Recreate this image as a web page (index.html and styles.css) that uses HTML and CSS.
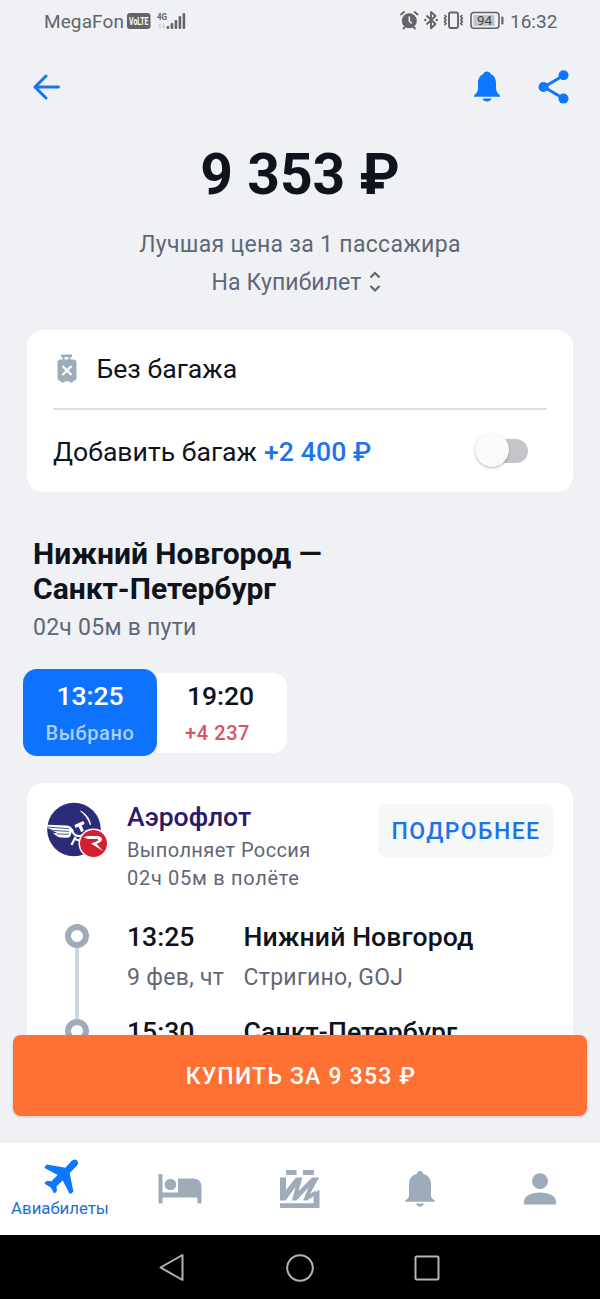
FILE: index.html
```html
<!DOCTYPE html>
<html lang="ru">
<head>
<meta charset="utf-8">
<title>Авиабилеты</title>
<link rel="stylesheet" href="styles.css">
</head>
<body>
<div class="status">
  <span class="carrier">MegaFon</span>
  <svg width="24" height="16" viewBox="0 0 24 16"><rect x="0" y="0" width="23.500" height="16" rx="3" fill="#626467"/><text class="volte" x="2" y="11.700" textLength="19.500" lengthAdjust="spacingAndGlyphs">VoLTE</text></svg>
  <svg class="signal" width="30" height="20" viewBox="0 0 30 20"><text class="net" x="0" y="8.500" textLength="10" lengthAdjust="spacingAndGlyphs">4G</text><path d="M3 18v-5l-1.500 1.500M6.500 12v5l1.500-1.500" fill="none" stroke="#c4c6ca" stroke-width="1"/><g fill="#626467"><rect x="9.600" y="15" width="2.600" height="3" rx="1"/><rect x="13.600" y="12" width="2.600" height="6" rx="1"/><rect x="17.600" y="9" width="2.600" height="9" rx="1"/><rect x="21.600" y="5" width="2.600" height="13" rx="1"/><rect x="25.600" y="2" width="2.600" height="16" rx="1"/></g></svg>
  <svg class="sys" width="106" height="22" viewBox="399 10 106 22"><circle cx="409.300" cy="20.800" r="7.500" fill="#626467"/><path d="M401 14.500l3-2.500M417.600 14.500l-3-2.500M405 27l-1.500 1.500M413.500 27l1.500 1.500" stroke="#626467" stroke-width="1.800" stroke-linecap="round"/><path d="M409.300 16.500v4.500l2.500 2.500" fill="none" stroke="#eff1f5" stroke-width="1.600"/><path d="M426.500 15.500l9 8.500-4.500 4.300V12l4.500 4-9 8.500" fill="none" stroke="#626467" stroke-width="1.900" stroke-linejoin="round"/><circle cx="425.300" cy="20" r="1.200" fill="#626467"/><circle cx="436.800" cy="20" r="1.200" fill="#626467"/><rect x="449" y="12.500" width="9" height="15.500" rx="1.500" fill="none" stroke="#626467" stroke-width="1.900"/><path d="M444.500 15l1.500 1.500-1.500 1.800 1.500 1.700-1.500 1.800 1.500 1.700-1.500 1.800M462.300 15l-1.500 1.500 1.500 1.800-1.500 1.700 1.500 1.800-1.500 1.700 1.500 1.800" fill="none" stroke="#626467" stroke-width="1.700"/><rect x="471" y="12.500" width="28" height="15.800" rx="3" fill="none" stroke="#626467" stroke-width="1.600"/><rect x="473.500" y="15" width="21" height="11" fill="#c2c3c6"/><rect x="501.300" y="16.500" width="2.200" height="8" rx="1" fill="#626467"/><text class="batt" x="484.500" y="25.200" text-anchor="middle">94</text></svg>
  <span class="clock">16:32</span>
</div>

<div class="toolbar">
  <svg width="28" height="28" viewBox="0 0 28 28"><path d="M25.500 14H2M13 3L2 14l11 11" fill="none" stroke="#1a74f0" stroke-width="3" stroke-linecap="round" stroke-linejoin="round"/></svg>
  <span class="actions">
    <svg width="28" height="32" viewBox="0 0 28 32"><path d="M14 .5c-2 0-3.200 1-3.700 2.400C6.500 4.500 5 8 5 12v5c0 3.500-1.500 5-3.500 7-1 1-.8 1.800.2 1.800h24.600c1 0 1.200-.8.2-1.800-2-2-3.500-3.500-3.500-7v-5c0-4-1.500-7.500-5.300-9.100C17.200 1.500 16 .5 14 .5zM9.500 27.500h9c-.6 1.900-2.200 3-4.500 3s-3.900-1.100-4.500-3z" fill="#0d77ff"/></svg>
    <svg width="32" height="34" viewBox="0 0 32 34"><path d="M25.500 5.500L6 17l19.500 11.500" fill="none" stroke="#0d77ff" stroke-width="3"/><g fill="#0d77ff"><circle cx="25.500" cy="5.300" r="5"/><circle cx="5.500" cy="17" r="5"/><circle cx="25.500" cy="28.600" r="5"/></g></svg>
  </span>
</div>

<main class="content">
  <div class="price">9 353 ₽</div>
  <div class="sub">
    <div class="sub-price">Лучшая цена за 1 пассажира</div>
    <div class="sub-agent"><span>На Купибилет</span><svg width="12" height="22" viewBox="0 0 12 22"><path d="M1.500 6.500L6 2l4.500 4.500M1.500 15L6 19.500l4.500-4.500" fill="none" stroke="#5f6777" stroke-width="2.200"/></svg></div>
  </div>

  <section class="card baggage">
    <div class="bag-row">
      <svg width="20" height="30" viewBox="0 0 20 30"><path d="M4 .5h11v2.500h-1.500v3h-2v-3h-4v3h-2v-3H4z" fill="#9dabba"/><path d="M3.500 5.500h13a3 3 0 0 1 3 3v14.900a3.500 3.500 0 0 1-3 3.500l-1 1.600h-2.500l-1-1.300h-4l-1 1.300H4.500l-1-1.600a3.500 3.500 0 0 1-3-3.500V8.500a3 3 0 0 1 3-3z" fill="#9dabba"/><path d="M5.500 12l9 9M14.500 12l-9 9" stroke="#fff" stroke-width="2.300"/></svg>
      <span class="bag-none">Без багажа</span>
    </div>
    <div class="bag-row add">
      <span class="bag-add">Добавить багаж</span><span class="bag-cost">+2 400 ₽</span>
      <span class="switch"><span class="knob"></span></span>
    </div>
  </section>

  <h1 class="route"><span class="from">Нижний Новгород —</span><br><span class="to">Санкт-Петербург</span></h1>
  <div class="travel">02ч 05м в пути</div>

  <div class="times">
    <div class="time on"><b>13:25</b><span class="picked">Выбрано</span></div>
    <div class="time off"><b>19:20</b><span class="extra">+4 237</span></div>
  </div>

  <section class="card flight">
    <div class="airline">
      <svg class="logo" width="62" height="58" viewBox="0 0 62 58"><circle cx="27" cy="27.500" r="26.800" fill="#2c2b78"/><path d="M0 22.800l20 .8c3 .2 5 1.700 5.500 4.400L23 35c-7 2-13 .5-17-4l5 .3-8-3.600h3L0 26z" fill="#fff"/><path d="M0 25l22 1.700M5 28.400l17 1M10 32l12 .2" stroke="#2c2b78" stroke-width=".8"/><path d="M33.500 9c6 3 9.500 8 10 14-2.500-6-5.500-10.500-10-14z" fill="#fff" stroke="#fff" stroke-width=".8"/><path d="M25 27c.5 5 4 7.500 8 7 4-.5 6.500-3 7-6" fill="none" stroke="#fff" stroke-width="2.200"/><path d="M28 24.500l9-4M32.500 22.500l3 7" fill="none" stroke="#fff" stroke-width="3.200"/><path d="M28.500 35l-4 8M28 37l4 1.500" stroke="#fff" stroke-width="2.200"/><circle cx="46.500" cy="41.500" r="15" fill="#fff"/><circle cx="46.500" cy="41.500" r="13.500" fill="#d3202f"/><path d="M36.500 35.500l3-1.500H50c5.500 0 6.500 4.500 2.500 6.500l-3 1.200 6.500 7.300-12-7.500 5.500-2c2.500-1 2-2.500 0-2.500H41z" fill="#fff"/></svg>
      <div class="names">
        <div class="name">Аэрофлот</div>
        <div class="operator">Выполняет Россия</div>
        <div class="inair">02ч 05м в полёте</div>
      </div>
      <div class="more"><span>ПОДРОБНЕЕ</span></div>
    </div>
    <div class="legs">
      <div class="track"><i class="dot"></i><i class="line"></i><i class="dot"></i></div>
      <div class="stops">
        <span class="t">13:25</span><span class="city">Нижний Новгород</span>
        <span class="date">9 фев, чт</span><span class="port">Стригино, GOJ</span>
        <span class="t arr">15:30</span><span class="city arr">Санкт-Петербург</span>
      </div>
    </div>
  </section>
</main>

<div class="buy"><span>КУПИТЬ ЗА 9 353 ₽</span></div>

<nav class="tabs">
  <div class="tab active">
    <svg width="35" height="35" viewBox="0 0 35 35"><path d="M33 1.500c1.600 1.600 1.200 4-.6 5.800l-6.700 6.700 3.700 18.500-2.200 2.100c-.8.500-1.600.2-2-.6l-6.500-12.500-6.300 6 .6 4.300-2.200 2.400-1-.3-3-5.500-5.800-3.300-.4-1.200 2.300-2.200 4.500.6 6.200-6.200L1.500 9.500C.5 9 .5 8.200 1 7.500l2-2 18.300 3.300L27.500 2c1.800-1.700 4-2 5.500-.5z" fill="#0d77ff"/></svg>
    <span>Авиабилеты</span>
  </div>
  <div class="tab"><svg width="44" height="30" viewBox="0 0 44 30"><path d="M.5 0h4v18.500h15.500V4.500h15c5.500 0 8.500 3.500 8.500 8.500v16.500h-4V23.500h-35v6h-4z" fill="#9dabba"/><circle cx="12.500" cy="10.500" r="5.800" fill="#9dabba"/></svg></div>
  <div class="tab"><svg width="40" height="38" viewBox="0 0 40 38"><path d="M6 0h10.500v5H6zM23 0h11v5H23zM0 33.300h33.500V23.500l6-4V38H0z" fill="#9dabba"/><path d="M0 7.500h6V20L16 7.500h6.500L18.500 21 32 7.500h7L30 24l6-4-2 6-7 4.500h-4l5.500-13L16.500 30.500H12L15.500 17 5.500 30.500H0z" fill="#9dabba"/></svg></div>
  <div class="tab"><svg width="30" height="36" viewBox="0 0 30 36"><path d="M15 0c-1.700 0-3 1-3 2.800C7 4.200 4 8 4 13v11.500c0 2-1.500 3.500-3.700 5v1.300h29.400v-1.300c-2.200-1.500-3.700-3-3.700-5V13c0-5-3-8.800-8-10.200C18 1 16.700 0 15 0zM11 32.500h8c-.6 2-2 3.200-4 3.200s-3.400-1.200-4-3.200z" fill="#9dabba"/></svg></div>
  <div class="tab"><svg width="32" height="32" viewBox="0 0 32 32"><circle cx="16" cy="8.200" r="8" fill="#9dabba"/><path d="M0 31.500V29c0-6 7-9.500 16-9.500S32 23 32 29v2.500z" fill="#9dabba"/></svg></div>
</nav>

<div class="sysnav">
  <svg width="28" height="30" viewBox="0 0 28 30"><path d="M23.500 2v25L1.500 14.500z" fill="none" stroke="#b4b4b4" stroke-width="2" stroke-linejoin="round"/></svg>
  <svg width="30" height="30" viewBox="0 0 30 30"><circle cx="15" cy="15" r="12.800" fill="none" stroke="#b4b4b4" stroke-width="2"/></svg>
  <svg width="26" height="26" viewBox="0 0 26 26"><rect x="1.500" y="1.500" width="23" height="23" rx="1" fill="none" stroke="#b4b4b4" stroke-width="2"/></svg>
</div>
</body>
</html>
```

FILE: styles.css
```css
* { box-sizing: border-box; }
body {
  margin: 0;
  width: 600px;
  height: 1299px;
  position: relative;
  overflow: hidden;
  display: flex;
  flex-direction: column;
  background: #eff1f5;
  color: #0e131c;
  font-family: Roboto, "Liberation Sans", sans-serif;
  white-space: nowrap;
}
svg { display: block; flex: none; }

.status { height: 42px; flex: none; display: flex; align-items: center; padding: 0 42px 0 44px; color: #626467; }
.carrier { width: 83px; font-size: 19px; letter-spacing: .1px; }
.volte { font: 700 10px Roboto, sans-serif; fill: #fff; }
.signal { margin-left: 6px; overflow: visible; }
.net { font: 700 9px Roboto, sans-serif; fill: #626467; }
.sys { margin-left: auto; }
.batt { font: 400 13.5px Roboto, sans-serif; fill: #444648; }
.clock { width: 48px; margin-left: 5px; font-size: 19px; }

.toolbar { height: 98px; flex: none; display: flex; justify-content: space-between; align-items: flex-start; padding: 31px 30px 0 33px; }
.actions { display: flex; align-items: center; gap: 37px; margin-top: -3px; }

.content { height: 1001px; flex: none; overflow: hidden; padding-top: 2px; }
.price { font-weight: 700; font-size: 57px; line-height: 66px; text-align: center; }
.sub { margin-top: 18px; font-size: 23px; line-height: 38px; color: #5f6777; text-align: center; }
.sub-price { letter-spacing: .3px; }
.sub-agent { display: flex; justify-content: center; align-items: center; gap: 8px; padding-right: 7px; letter-spacing: .1px; }
.sub-agent svg { margin-top: -2px; }

.card { margin: 0 27px; background: #fff; border-radius: 16px; }
.baggage { margin-top: 28px; height: 162px; padding: 0 26px; font-size: 26.6px; }
.bag-row { height: 78px; display: flex; align-items: center; padding-left: 3.5px; }
.bag-none { margin: -2px 0 0 20px; }
.add { height: 84px; padding: 0 19px 0 0; border-top: 2px solid #dfe0e2; }
.bag-cost { margin-left: 7px; color: #1a74f0; font-weight: 500; letter-spacing: .1px; }
.switch { position: relative; margin-left: auto; width: 46px; height: 24px; border-radius: 12px; background: #c4c5c9; }
.knob { position: absolute; left: -7px; top: -6px; width: 34px; height: 34px; border-radius: 50%; background: #fafafa; box-shadow: 0 1px 2px rgba(0, 0, 0, .3); }

.route { margin: 44px 0 0 33px; font-weight: 700; font-size: 30px; line-height: 35px; }
.travel { margin-left: 33px; padding-top: 2px; font-size: 23px; line-height: 40px; letter-spacing: .25px; color: #5f6777; }

.times { display: flex; align-items: center; margin: 21px 0 0 23px; }
.time { display: flex; flex-direction: column; align-items: center; }
.time b { font-weight: 500; font-size: 26.5px; line-height: 38px; }
.time span { font-weight: 500; font-size: 20px; line-height: 36px; letter-spacing: .6px; }
.on { width: 134px; height: 87px; padding-top: 8px; border-radius: 14px; background: #0d73ff; color: #fff; }
.on .picked { color: #a9d0ff; }
.off { width: 130px; height: 80px; padding: 4px 3px 0 0; border-radius: 0 14px 14px 0; background: #fff; }
.off .extra { color: #e04f64; padding-right: 6px; }

.flight { margin-top: 27px; height: 300px; padding: 17px 20px 0; }
.airline { display: flex; align-items: flex-start; }
.logo { margin-top: 2px; }
.names { margin-left: 18px; font-size: 20px; color: #5f6777; }
.name { font-weight: 500; font-size: 26.6px; line-height: 34px; color: #2a1a6b; }
.operator { padding-top: 1px; line-height: 30px; letter-spacing: .4px; }
.inair { line-height: 27px; letter-spacing: .7px; }
.more { margin: 4px 0 0 auto; width: 175px; height: 53px; padding-left: 1px; border-radius: 8px; background: #f5f7f9; color: #1a74e8; font-weight: 500; font-size: 23px; line-height: 56px; text-align: center; letter-spacing: 1.4px; }
.legs { display: flex; margin-top: 25px; }
.track { width: 24px; margin: 7px 0 0 18px; display: flex; flex-direction: column; align-items: center; }
.dot { width: 24px; height: 24px; flex: none; border: 6.5px solid #9dabba; border-radius: 50%; }
.line { width: 4px; height: 71px; background: #d0d6dd; }
.stops { margin-left: 38px; display: grid; grid-template-columns: 116.5px auto; font-size: 23px; line-height: 40px; color: #5f6777; }
.t, .city { font-weight: 500; font-size: 26.6px; color: #0e131c; }
.city { letter-spacing: .1px; }
.date, .port { height: 40px; padding-top: 1px; letter-spacing: .3px; }
.arr { margin-top: 15px; }

.buy { position: absolute; left: 13px; top: 1035px; width: 574px; height: 81px; border-radius: 8px; background: #ff7033; box-shadow: 0 1px 3px rgba(0, 0, 0, .18); color: #fff; font-weight: 500; font-size: 23px; line-height: 84px; text-align: center; letter-spacing: 1.2px; padding-left: 2px; }

.tabs { height: 94px; flex: none; display: grid; grid-template-columns: repeat(5, 1fr); background: #fff; border-top: 1px solid #e6e7ec; }
.tab { display: flex; flex-direction: column; align-items: center; justify-content: center; }
.active { justify-content: flex-start; padding-top: 17px; color: #1d6fd0; font-size: 16.8px; line-height: 20px; }
.active svg { margin: 0 0 4px 3px; }

.sysnav { height: 64px; flex: none; display: grid; grid-template-columns: repeat(3, 127px); justify-content: center; align-items: center; justify-items: center; padding-top: 2px; background: #000; }
```
